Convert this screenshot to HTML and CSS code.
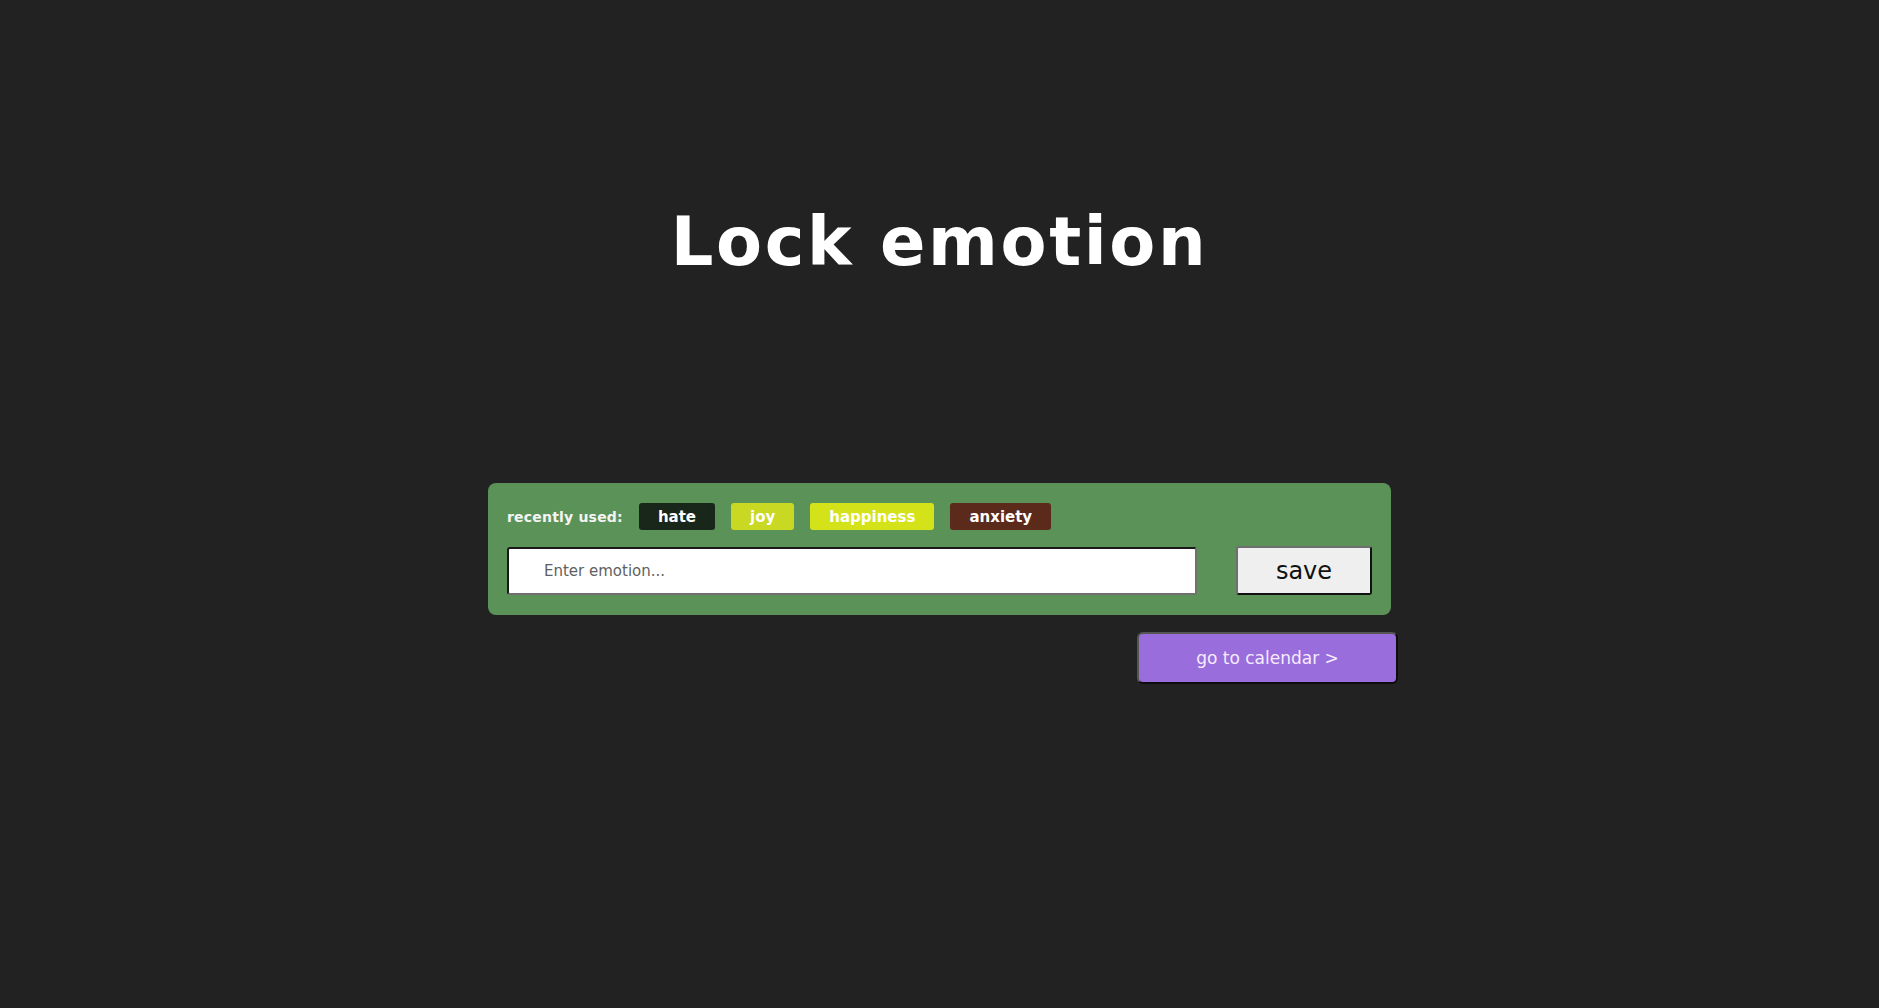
FILE: index.html
```html
<!DOCTYPE html>
<html lang="en">
<head>
<meta charset="utf-8">
<title>Lock emotion</title>
<link rel="stylesheet" href="styles.css">
</head>
<body>
<main class="page">
  <h1 class="title">Lock emotion</h1>
  <section class="card">
    <div class="recent">
      <span class="recent-label">recently used:</span>
      <span class="chip chip-hate">hate</span>
      <span class="chip chip-joy">joy</span>
      <span class="chip chip-happiness">happiness</span>
      <span class="chip chip-anxiety">anxiety</span>
    </div>
    <form class="entry">
      <input class="entry-input" type="text" placeholder="Enter emotion...">
      <button class="save-btn" type="button">save</button>
    </form>
  </section>
  <div class="nav-row">
    <button class="calendar-btn" type="button">go to calendar &gt;</button>
  </div>
</main>
</body>
</html>
```

FILE: styles.css
```css
* { box-sizing: border-box; }

html, body {
  margin: 0;
  background: #222222;
  height: 100%;
}

body {
  font-family: "DejaVu Sans", Inter, sans-serif;
  color: #ffffff;
}

.page {
  display: flex;
  flex-direction: column;
  align-items: center;
  padding-top: 209px;
}

.title {
  margin: 0;
  font-size: 67px;
  line-height: 1;
  font-weight: 700;
  letter-spacing: 2.6px;
  color: #ffffff;
}

.card {
  margin-top: 207px;
  width: 903px;
  background: #5b9257;
  border-radius: 8px;
  padding: 20px 19px;
  display: flex;
  flex-direction: column;
  gap: 16px;
}

.recent {
  display: flex;
  align-items: center;
  gap: 16px;
}

.recent-label {
  font-size: 14px;
  font-weight: 700;
  letter-spacing: 0.2px;
  color: #f4f4f4;
}

.chip {
  display: inline-block;
  height: 27px;
  line-height: 28px;
  padding: 0 19px;
  border-radius: 3px;
  font-size: 15px;
  font-weight: 700;
  color: #ffffff;
}

.chip-hate { background: #19261a; }
.chip-joy { background: #c9d822; }
.chip-happiness { background: #d4e319; }
.chip-anxiety { background: #5c2a1a; }

.entry {
  margin: 0;
  display: flex;
  align-items: center;
  justify-content: space-between;
}

.entry-input {
  width: 690px;
  height: 48px;
  border: 2px solid #707070;
  border-top-color: #1a1a1a;
  border-left-color: #1a1a1a;
  border-radius: 3px;
  background: #ffffff;
  padding: 0 0 0 35px;
  font-family: "DejaVu Sans", Inter, sans-serif;
  font-size: 15px;
  color: #222;
}

.entry-input::placeholder {
  color: #5f5f5f;
}

.save-btn {
  width: 136px;
  height: 49px;
  background: #efefef;
  border: 2px solid #111;
  border-top-color: #6f6f6f;
  border-left-color: #6f6f6f;
  border-radius: 3px;
  font-family: "DejaVu Sans", Inter, sans-serif;
  font-size: 24px;
  font-weight: 400;
  color: #111;
}

.nav-row {
  width: 903px;
  margin-top: 17px;
  display: flex;
  justify-content: flex-end;
}

.calendar-btn {
  width: 261px;
  height: 52px;
  margin-right: -7px;
  background: #9a6ddc;
  border: 2px solid #0d0d0d;
  border-top-color: #555555;
  border-left-color: #555555;
  border-radius: 6px;
  font-family: "DejaVu Sans", Inter, sans-serif;
  font-size: 17px;
  font-weight: 400;
  color: #f5ecff;
}
```
